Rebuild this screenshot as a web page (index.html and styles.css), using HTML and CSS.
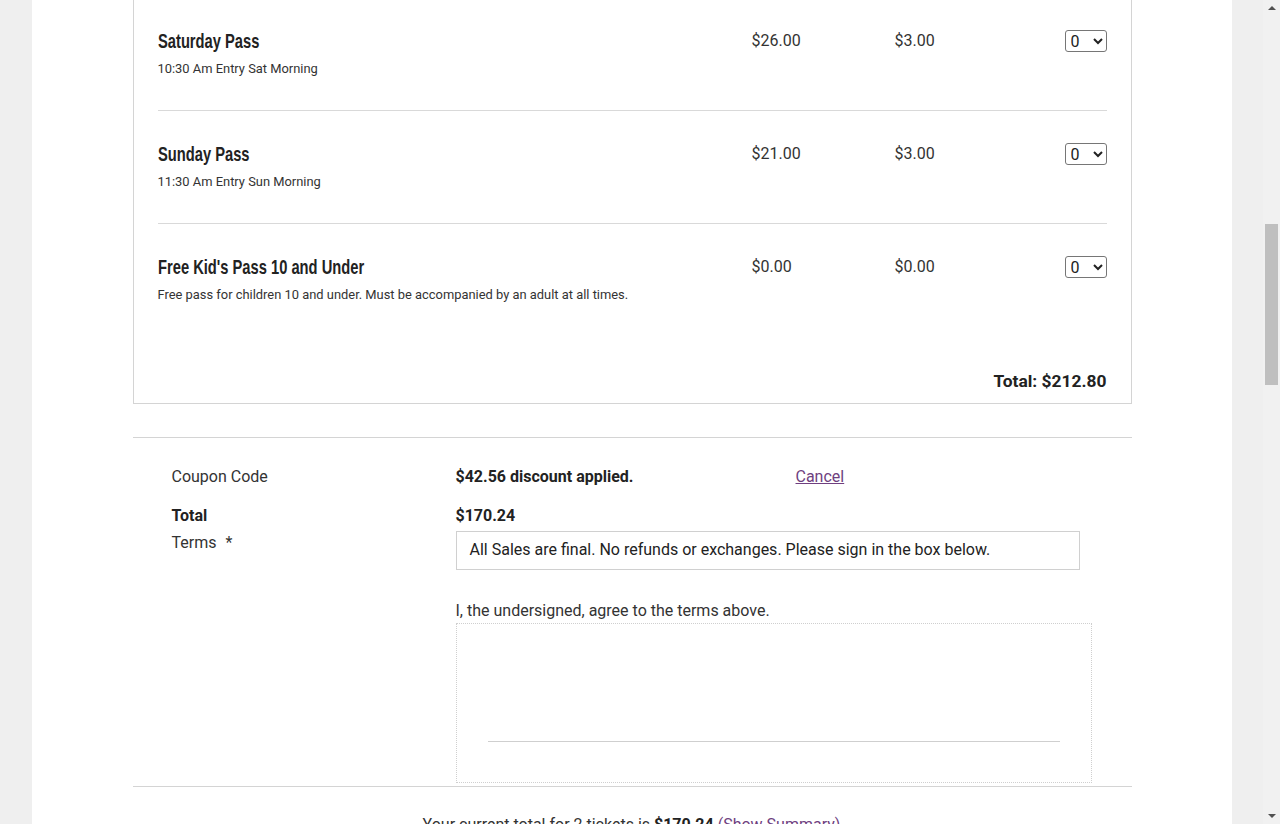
FILE: index.html
```html
<!DOCTYPE html>
<html lang="en">
<head>
<meta charset="utf-8">
<title>Tickets</title>
<link rel="stylesheet" href="styles.css">
</head>
<body>
<div class="window">
  <div class="viewport">
    <main class="page">
      <section class="tickets">
        <div class="ticket-row">
          <div class="ticket-info">
            <h3 class="ticket-name">Saturday Pass</h3>
            <p class="ticket-desc">10:30 Am Entry Sat Morning</p>
          </div>
          <div class="ticket-price">$26.00</div>
          <div class="ticket-fee">$3.00</div>
          <div class="ticket-qty">
            <select class="qty-select"><option>0</option><option>1</option><option>2</option></select>
          </div>
        </div>
        <div class="ticket-row">
          <div class="ticket-info">
            <h3 class="ticket-name">Sunday Pass</h3>
            <p class="ticket-desc">11:30 Am Entry Sun Morning</p>
          </div>
          <div class="ticket-price">$21.00</div>
          <div class="ticket-fee">$3.00</div>
          <div class="ticket-qty">
            <select class="qty-select"><option>0</option><option>1</option><option>2</option></select>
          </div>
        </div>
        <div class="ticket-row ticket-row-last">
          <div class="ticket-info">
            <h3 class="ticket-name">Free Kid's Pass 10 and Under</h3>
            <p class="ticket-desc">Free pass for children 10 and under. Must be accompanied by an adult at all times.</p>
          </div>
          <div class="ticket-price">$0.00</div>
          <div class="ticket-fee">$0.00</div>
          <div class="ticket-qty">
            <select class="qty-select"><option>0</option><option>1</option><option>2</option></select>
          </div>
        </div>
        <div class="tickets-total">Total: $212.80</div>
      </section>

      <hr class="divider">

      <section class="checkout">
        <div class="field-label">Coupon Code</div>
        <div class="field-value coupon-value">
          <strong class="coupon-note">$42.56 discount applied.</strong>
          <a href="#" class="link">Cancel</a>
        </div>

        <div class="field-label field-strong">Total</div>
        <div class="field-value"><strong>$170.24</strong></div>

        <div class="field-label field-terms">Terms <span class="req">*</span></div>
        <div class="field-value field-terms">
          <div class="terms-box">All Sales are final. No refunds or exchanges. Please sign in the box below.</div>
          <p class="agree">I, the undersigned, agree to the terms above.</p>
          <div class="signature-pad">
            <div class="signature-line"></div>
          </div>
        </div>
      </section>

      <hr class="divider divider-tight">

      <p class="summary">Your current total for 2 tickets is <strong>$170.24</strong> <a href="#" class="link link-plain">(Show Summary)</a></p>
    </main>
  </div>
  <div class="scrollbar">
    <span class="scroll-arrow scroll-up"></span>
    <div class="scroll-track"><div class="scroll-thumb"></div></div>
    <span class="scroll-arrow scroll-down"></span>
  </div>
</div>
</body>
</html>
```

FILE: styles.css
```css
html, body {
  margin: 0;
  padding: 0;
  height: 100%;
  overflow: hidden;
}

body {
  background: #efefef;
  font-family: Roboto, "Liberation Sans", Arial, sans-serif;
  color: #222;
  font-size: 16px;
}

.window {
  display: flex;
  height: 100vh;
}

.viewport {
  flex: 1;
  overflow: hidden;
}

.page {
  width: 1200px;
  margin: 0 auto;
  height: 100vh;
  background: #fff;
  overflow: hidden;
}

/* ticket table (scrolled so its header sits above the fold) */
.tickets {
  margin: -36px 0 0 101px;
  width: 999px;
  box-sizing: border-box;
  border: 1px solid #d4d4d4;
  padding: 33px 24px 10px;
}

.ticket-row {
  display: grid;
  grid-template-columns: 594px 143px 1fr auto;
  align-items: start;
  padding: 29px 0 31px;
  border-bottom: 1px solid #d9d9d9;
}

.ticket-row-last {
  border-bottom: none;
}

.ticket-name {
  margin: 0;
  font-family: "Liberation Sans", Arial, sans-serif;
  font-weight: 700;
  font-size: 21px;
  line-height: 27px;
  color: #222;
  display: inline-block;
  white-space: nowrap;
  transform: scaleX(0.7);
  transform-origin: left center;
}

.ticket-desc {
  margin: 5px 0 0;
  font-size: 12.9px;
  line-height: 20px;
  color: #333;
}

.ticket-price,
.ticket-fee {
  font-size: 16px;
  line-height: 28px;
  color: #333;
}

.ticket-qty {
  padding-top: 3px;
}

.qty-select {
  width: 42px;
  height: 22px;
  font-family: Roboto, "Liberation Sans", sans-serif;
  font-size: 16px;
  color: #222;
  border: 1px solid #767676;
  border-radius: 3px;
  background: #fff;
  padding: 0 0 0 1px;
}

.tickets-total {
  margin-top: 33px;
  text-align: right;
  font-weight: 700;
  font-size: 17.4px;
  line-height: 24px;
  color: #222;
}

.divider {
  margin: 33px 0 0 101px;
  width: 999px;
  border: none;
  border-top: 1px solid #d4d4d4;
  height: 0;
}

.divider-tight {
  margin-top: 3px;
}

/* checkout form */
.checkout {
  display: grid;
  grid-template-columns: 284px 1fr;
  padding: 27px 0 0 140px;
  row-gap: 15px;
  color: #333;
}

.field-label {
  line-height: 24px;
}

.field-strong {
  font-weight: 700;
  color: #222;
}

.field-value {
  line-height: 24px;
}

.field-value strong {
  color: #222;
}

.field-terms {
  margin-top: -12px;
}

.coupon-value {
  display: flex;
}

.coupon-note {
  width: 340px;
}

.req {
  margin-left: 5px;
}

.link {
  color: #6f3f80;
}

.link-plain {
  text-decoration: none;
}

.terms-box {
  width: 624px;
  box-sizing: border-box;
  border: 1px solid #d0d0d0;
  padding: 6px 13px 8px;
  line-height: 23px;
  color: #222;
}

.agree {
  margin: 29px 0 0;
  line-height: 24px;
  color: #333;
}

.signature-pad {
  width: 636px;
  height: 160px;
  box-sizing: border-box;
  border: 1px dotted #cfcfcf;
  padding: 117px 31px 0;
}

.signature-line {
  border-top: 1px solid #cfcfcf;
}

.summary {
  margin: 26px 0 0;
  text-align: center;
  line-height: 24px;
  color: #333;
}

.summary strong {
  color: #222;
}

/* window scrollbar */
.scrollbar {
  width: 17px;
  flex: none;
  background: #f1f1f1;
  display: flex;
  flex-direction: column;
  align-items: center;
}

.scroll-track {
  flex: 1;
  width: 100%;
  position: relative;
}

.scroll-thumb {
  position: absolute;
  left: 2px;
  right: 2px;
  top: 208px;
  height: 161px;
  background: #bfbfbf;
}

.scroll-arrow {
  display: block;
  width: 0;
  height: 0;
  border-left: 4px solid transparent;
  border-right: 4px solid transparent;
  margin: 6px 0;
}

.scroll-up {
  border-bottom: 4px solid #505050;
}

.scroll-down {
  border-top: 4px solid #505050;
}
```
